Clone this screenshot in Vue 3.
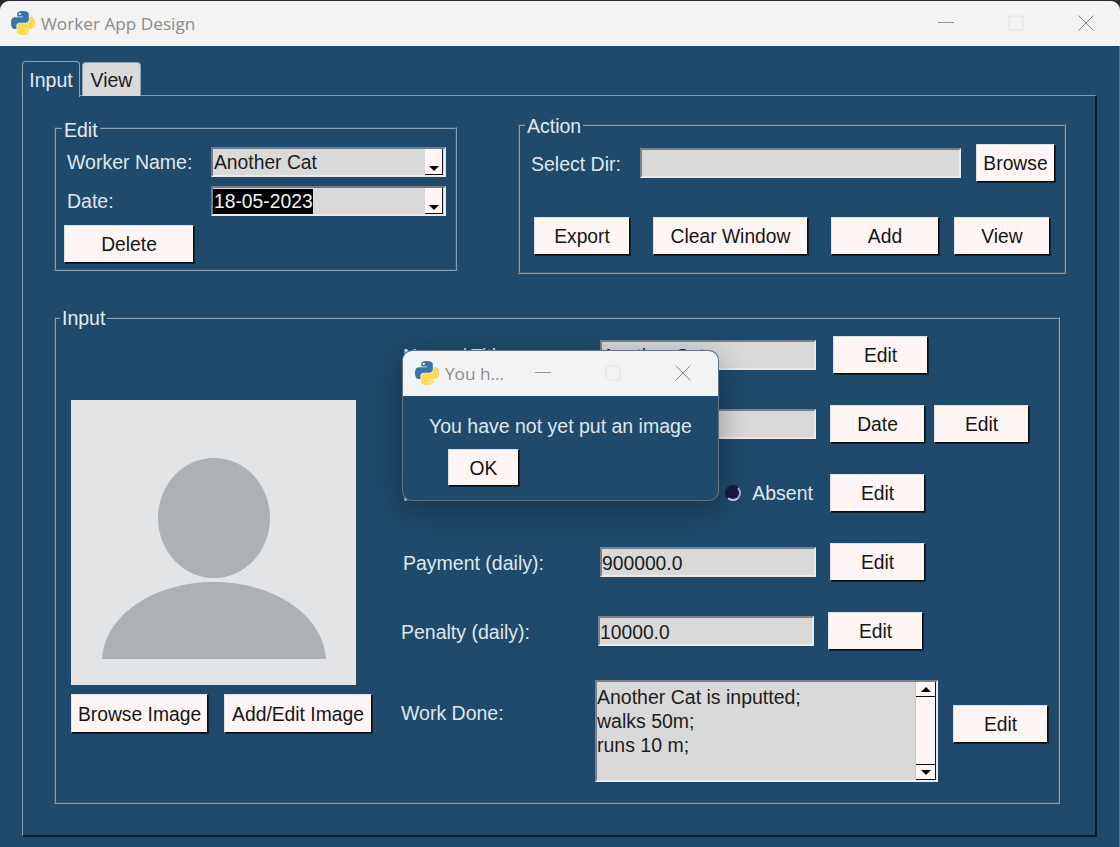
<template>
  <div class="window">
    <div class="titlebar">
      <svg class="pyicon" viewBox="0 0 110 110">
        <path fill="#3776ab" d="M54.9 0C26.8 0 28.6 12.2 28.6 12.2v12.6h26.8v3.8H17.9S0 26.6 0 54.9s15.6 27.3 15.6 27.3h9.3V69.1s-.5-15.6 15.4-15.6h26.5s14.9.2 14.9-14.4V14.9S84 0 54.9 0zM40.2 8.5a4.8 4.8 0 1 1 0 9.6 4.8 4.8 0 0 1 0-9.6z" />
        <path fill="#ffd94f" transform="rotate(180 55 55)" d="M54.9 0C26.8 0 28.6 12.2 28.6 12.2v12.6h26.8v3.8H17.9S0 26.6 0 54.9s15.6 27.3 15.6 27.3h9.3V69.1s-.5-15.6 15.4-15.6h26.5s14.9.2 14.9-14.4V14.9S84 0 54.9 0zM40.2 8.5a4.8 4.8 0 1 1 0 9.6 4.8 4.8 0 0 1 0-9.6z" />
      </svg>
      <span class="title">Worker App Design</span>
      <div class="winbtns">
        <svg viewBox="0 0 16 16"><path d="M0 7.5h16" stroke="#999" /></svg>
        <svg viewBox="0 0 16 16"><rect x="1" y="1" width="14" height="14" rx="2" fill="none" stroke="#e2e2e2" /></svg>
        <svg viewBox="0 0 16 16"><path d="M.5.5l15 15M15.5.5l-15 15" stroke="#888" /></svg>
      </div>
    </div>

    <div class="client">
      <div class="tabs">
        <div class="tab active">Input</div>
        <div class="tab">View</div>
      </div>

      <div class="panel">
        <div class="top-row">
          <fieldset class="group edit-group">
            <legend>Edit</legend>
            <div class="edit-row">
              <span class="edit-label">Worker Name:</span>
              <div class="combo">
                <span class="combo-text">Another Cat</span>
                <span class="combo-btn"><i class="arrow-down"></i></span>
              </div>
            </div>
            <div class="edit-row">
              <span class="edit-label">Date:</span>
              <div class="combo">
                <span class="combo-text selected">18-05-2023</span>
                <span class="combo-btn"><i class="arrow-down"></i></span>
              </div>
            </div>
            <button class="btn delete-btn">Delete</button>
          </fieldset>

          <fieldset class="group action-group">
            <legend>Action</legend>
            <div class="dir-row">
              <span class="dir-label">Select Dir:</span>
              <div class="entry dir-entry"></div>
              <button class="btn browse-btn">Browse</button>
            </div>
            <div class="action-btns">
              <button v-for="a in actions" :key="a.label" class="btn" :class="a.cls">{{ a.label }}</button>
            </div>
          </fieldset>
        </div>

        <fieldset class="group input-group">
          <legend>Input</legend>
          <div class="input-body">
            <div class="image-col">
              <div class="photo">
                <svg viewBox="0 0 285 285">
                  <ellipse cx="143" cy="118" rx="56" ry="60" fill="#adb1b5" />
                  <path d="M31 259C34 214 84 182 143 182S252 214 255 259Z" fill="#adb1b5" />
                </svg>
              </div>
              <div class="image-btns">
                <button class="btn browse-img">Browse Image</button>
                <button class="btn add-img">Add/Edit Image</button>
              </div>
            </div>

            <div class="form-col">
              <div class="form-row first">
                <span class="form-label">Name / Title:</span>
                <div class="entry field">Another Cat</div>
                <button class="btn edit-btn">Edit</button>
              </div>
              <!-- label and value of this row sit fully behind the dialog -->
              <div class="form-row">
                <span class="form-label"></span>
                <div class="entry field"></div>
                <button class="btn edit-btn">Date</button>
                <button class="btn edit-btn second">Edit</button>
              </div>
              <div class="form-row">
                <span class="form-label">Present Status:</span>
                <div class="radios">
                  <span class="radio"></span><span class="radio-label present">Present</span>
                  <span class="radio on"></span><span class="radio-label">Absent</span>
                </div>
                <button class="btn edit-btn">Edit</button>
              </div>
              <div class="form-row">
                <span class="form-label">Payment (daily):</span>
                <div class="entry field">900000.0</div>
                <button class="btn edit-btn">Edit</button>
              </div>
              <div class="form-row shifted">
                <span class="form-label">Penalty (daily):</span>
                <div class="entry field">10000.0</div>
                <button class="btn edit-btn">Edit</button>
              </div>
              <div class="form-row work-row">
                <span class="form-label work-label">Work Done:</span>
                <div class="entry work-text">
                  <div class="work-lines">
                    <div v-for="line in workLines" :key="line">{{ line }}</div>
                  </div>
                  <div class="scrollbar">
                    <span class="scroll-btn"><i class="arrow-up"></i></span>
                    <span class="thumb"></span>
                    <span class="scroll-btn"><i class="arrow-down"></i></span>
                  </div>
                </div>
                <button class="btn edit-btn work-edit">Edit</button>
              </div>
            </div>
          </div>
        </fieldset>
      </div>
    </div>

    <!-- messagebox over the main window -->
    <div class="dialog">
      <div class="dialog-title">
        <svg class="pyicon" viewBox="0 0 110 110">
          <path fill="#3776ab" d="M54.9 0C26.8 0 28.6 12.2 28.6 12.2v12.6h26.8v3.8H17.9S0 26.6 0 54.9s15.6 27.3 15.6 27.3h9.3V69.1s-.5-15.6 15.4-15.6h26.5s14.9.2 14.9-14.4V14.9S84 0 54.9 0zM40.2 8.5a4.8 4.8 0 1 1 0 9.6 4.8 4.8 0 0 1 0-9.6z" />
          <path fill="#ffd94f" transform="rotate(180 55 55)" d="M54.9 0C26.8 0 28.6 12.2 28.6 12.2v12.6h26.8v3.8H17.9S0 26.6 0 54.9s15.6 27.3 15.6 27.3h9.3V69.1s-.5-15.6 15.4-15.6h26.5s14.9.2 14.9-14.4V14.9S84 0 54.9 0zM40.2 8.5a4.8 4.8 0 1 1 0 9.6 4.8 4.8 0 0 1 0-9.6z" />
        </svg>
        <span class="title">You h...</span>
        <div class="winbtns small">
          <svg viewBox="0 0 16 16"><path d="M0 7.5h16" stroke="#999" /></svg>
          <svg viewBox="0 0 16 16"><rect x="1" y="1" width="14" height="14" rx="2" fill="none" stroke="#e2e2e2" /></svg>
          <svg viewBox="0 0 16 16"><path d="M.5.5l15 15M15.5.5l-15 15" stroke="#888" /></svg>
        </div>
      </div>
      <div class="dialog-body">
        <p class="dialog-msg">You have not yet put an image</p>
        <button class="btn ok-btn">OK</button>
      </div>
    </div>
  </div>
</template>

<script setup>
const actions = [
  { label: "Export", cls: "a-export" },
  { label: "Clear Window", cls: "a-clear" },
  { label: "Add", cls: "a-add" },
  { label: "View", cls: "a-view" },
];

const workLines = ["Another Cat is inputted;", "walks 50m;", "runs 10 m;"];
</script>

<style scoped>
.window {
  position: relative;
  width: 1120px;
  height: 847px;
  overflow: hidden;
  font-family: "Liberation Sans", Arial, sans-serif;
  font-size: 19.5px;
  color: #dfe7ee;
}

/* title bars */
.titlebar {
  display: flex;
  align-items: center;
  height: 45px;
  margin-top: 1px;
  padding-left: 11px;
  padding-bottom: 1px;
  box-sizing: border-box;
  background: #f3f3f3;
  border-radius: 9px 9px 0 0;
}
.pyicon {
  width: 24px;
  height: 24px;
  flex: none;
}
.title {
  margin-left: 6px;
  font-family: "Open Sans", sans-serif;
  font-size: 17.2px;
  color: #8b8b8b;
}
.winbtns {
  display: flex;
  align-items: center;
  gap: 54px;
  margin-left: auto;
  margin-right: 26px;
}
.winbtns svg {
  width: 16px;
  height: 16px;
}

.client {
  height: 801px;
  padding: 15px 22px 0;
  background: #1f4a6b;
  box-sizing: border-box;
  border-right: 1px solid #5d7488;
}

/* tabs */
.tabs {
  display: flex;
  gap: 2px;
  height: 35px;
  margin-bottom: -1px;
  position: relative;
  z-index: 1;
}
.tab {
  width: 59px;
  height: 34px;
  margin-top: 1px;
  background: #d9d9d9;
  color: #1c1c1c;
  text-align: center;
  line-height: 35px;
  border: 1px solid #8ea4b6;
  border-bottom: none;
  border-radius: 4px 4px 0 0;
  box-sizing: border-box;
}
.tab.active {
  width: 58px;
  height: 36px;
  margin-top: 0;
  line-height: 36px;
  background: #1f4a6b;
  color: #e3eaf0;
  border-bottom: none;
}

.panel {
  width: 1075px;
  height: 742px;
  box-sizing: border-box;
  padding: 20px 0 0 31px;
  border: 1px solid #7f9ab0;
  border-right: 2px solid #0c1a26;
  border-bottom: 2px solid #0c1a26;
}

.top-row {
  display: flex;
  align-items: flex-start;
}

/* label frames */
.group {
  margin: 0;
  padding: 0;
  border: 2px groove #86a0b6;
  box-sizing: border-box;
  min-width: 0;
}
.group legend {
  padding: 4px 2px 0;
  line-height: 20px;
  color: #e3eaf0;
}
.edit-group {
  width: 403px;
  height: 155px;
  padding: 7px 8px 0;
}
.edit-group legend {
  margin-left: -2px;
}
.action-group {
  width: 548px;
  height: 160px;
  margin: -2px 0 0 61px;
  padding: 12px 0 0 11px;
}
.action-group legend {
  margin-left: -6px;
  padding-top: 2px;
}
.input-group {
  width: 1006px;
  height: 496px;
  margin-top: 34px;
  padding: 6px 0 0 15px;
}
.input-group legend {
  margin-left: -11px;
  padding-top: 0;
}

/* edit frame */
.edit-row {
  display: flex;
  align-items: center;
  height: 30px;
  margin-bottom: 9px;
}
.edit-label {
  width: 147px;
  padding-left: 3px;
  box-sizing: border-box;
}
.combo {
  position: relative;
  display: flex;
  align-items: center;
  width: 235px;
  height: 30px;
  padding: 2px 3px 2px 0;
  box-sizing: border-box;
  background: #d9d9d9;
  color: #1c1c1c;
  border-top: 2px solid #6f7d89;
  border-left: 2px solid #6f7d89;
  border-right: 2px solid #e8ecef;
  border-bottom: 2px solid #e8ecef;
}
.combo-text {
  flex: 1;
  padding: 2px 0 0 1px;
  font-size: 19.3px;
}
.combo-text.selected {
  flex: none;
  height: 25px;
  padding-top: 0;
  line-height: 26px;
  background: #000;
  color: #f2f2f2;
}
.combo-btn {
  position: absolute;
  right: 1px;
  top: 0;
  bottom: 0;
  width: 18px;
  background: #fff5f5;
  border-right: 1px solid #111;
  border-bottom: 1px solid #111;
  box-sizing: border-box;
}
.combo-btn .arrow-down {
  position: absolute;
  left: 4px;
  bottom: 3px;
}
.arrow-down,
.arrow-up {
  display: block;
  width: 0;
  height: 0;
  border-left: 5px solid transparent;
  border-right: 5px solid transparent;
}
.arrow-down {
  border-top: 5px solid #000;
}
.arrow-up {
  border-bottom: 5px solid #000;
}

/* buttons */
.btn {
  display: block;
  height: 38px;
  padding: 2px 0 0;
  font: inherit;
  font-size: 19.3px;
  color: #151515;
  background: #fff5f5;
  border: 1px solid;
  border-color: #dbe1e6 #0b0b0b #0b0b0b #dbe1e6;
  box-shadow: 1px 1px 0 #14242f;
  border-radius: 0;
  box-sizing: border-box;
  flex: none;
}
.delete-btn {
  width: 130px;
}
.browse-btn {
  width: 79px;
  margin: -4px 0 0 15px;
}
.a-export {
  width: 96px;
  margin-left: 3px;
}
.a-clear {
  width: 155px;
  margin-left: 23px;
}
.a-add {
  width: 108px;
  margin-left: 23px;
}
.a-view {
  width: 96px;
  margin-left: 15px;
}
.action-btns {
  display: flex;
  margin-top: 39px;
}

/* entries */
.entry {
  height: 30px;
  padding-left: 0;
  line-height: 29px;
  font-size: 19.3px;
  box-sizing: border-box;
  background: #d9d9d9;
  color: #1c1c1c;
  border-top: 2px solid #76838f;
  border-left: 2px solid #76838f;
  border-right: 2px solid #e8ecef;
  border-bottom: 2px solid #e8ecef;
  flex: none;
}
.dir-row {
  display: flex;
  align-items: flex-start;
  height: 30px;
}
.dir-label {
  width: 109px;
  line-height: 32px;
}
.dir-entry {
  width: 321px;
}

/* input frame */
.input-body {
  display: flex;
  align-items: flex-start;
}
.image-col {
  width: 301px;
  margin: 66px 29px 0 0;
  flex: none;
}
.photo {
  width: 285px;
  height: 285px;
  background: #e2e4e6;
}
.photo svg {
  display: block;
  width: 285px;
  height: 285px;
}
.image-btns {
  display: flex;
  gap: 16px;
  margin-top: 9px;
}
.browse-img {
  width: 137px;
  height: 39px;
}
.add-img {
  width: 148px;
  height: 39px;
}
.form-col {
  display: flex;
  flex-direction: column;
  gap: 31px;
  margin-top: 2px;
}
.form-row {
  display: flex;
  align-items: center;
  height: 38px;
  margin-left: 2px;
}
.form-label {
  width: 197px;
  padding-top: 2px;
  box-sizing: border-box;
  flex: none;
}
.field {
  width: 216px;
}
.edit-btn {
  width: 95px;
  margin-left: 14px;
}
.first .edit-btn {
  margin-left: 17px;
}
.edit-btn.second {
  margin-left: 9px;
}
.shifted {
  margin-left: 0;
}
.radios {
  display: flex;
  align-items: center;
  width: 216px;
  flex: none;
}
.radio {
  width: 16px;
  height: 16px;
  margin-left: 2px;
  border-radius: 50%;
  box-sizing: border-box;
  border: 2px solid;
  border-color: #0e2233 #9fb3c3 #c8d5df #0e2233;
  flex: none;
}
.radio.on {
  background: #17174f;
  margin-left: 28px;
}
.radio-label {
  margin-left: 11px;
}
.radio-label.present {
  margin-left: 12px;
}
.work-row {
  align-items: flex-start;
  height: 102px;
  margin: -1px 0 0;
}
.work-label {
  width: 194px;
  padding-top: 0;
  line-height: 22px;
  margin-top: 22px;
}
.work-text {
  position: relative;
  width: 343px;
  height: 102px;
  line-height: 24px;
  padding: 3px 0 0 0;
  font-size: 19.5px;
}
.scrollbar {
  position: absolute;
  top: 0;
  right: 0;
  width: 21px;
  bottom: 0;
  display: flex;
  flex-direction: column;
  background: #fff5f5;
  border-left: 1px solid #c9c9c9;
  box-sizing: border-box;
}
.scroll-btn {
  display: flex;
  align-items: center;
  justify-content: center;
  height: 15px;
  border-right: 1px solid #111;
  border-bottom: 1px solid #111;
  box-sizing: border-box;
}
.scrollbar .thumb {
  flex: 1;
  border-right: 1px solid #111;
  border-bottom: 1px solid #111;
}
.work-edit {
  margin: 25px 0 0 15px;
}

/* dialog */
.dialog {
  position: absolute;
  left: 403px;
  top: 351px;
  width: 315px;
  height: 149px;
  border-radius: 9px;
  overflow: hidden;
  background: #1f4a6b;
  box-shadow: 0 0 0 1px #5f7486, 0 8px 32px rgba(0, 0, 0, 0.35);
}
.dialog-title {
  display: flex;
  align-items: center;
  height: 45px;
  padding: 0 0 1px 12px;
  box-sizing: border-box;
  background: #f3f3f3;
}
.dialog-title .winbtns {
  margin-right: 27px;
}
.dialog-msg {
  margin: 0;
  padding: 19px 0 0 26px;
  line-height: 22px;
  color: #dfe7ee;
}
.ok-btn {
  width: 71px;
  height: 37px;
  margin: 12px 0 0 45px;
}
</style>

<style>
html,
body {
  margin: 0;
  background: #2b2b2b;
}
</style>
